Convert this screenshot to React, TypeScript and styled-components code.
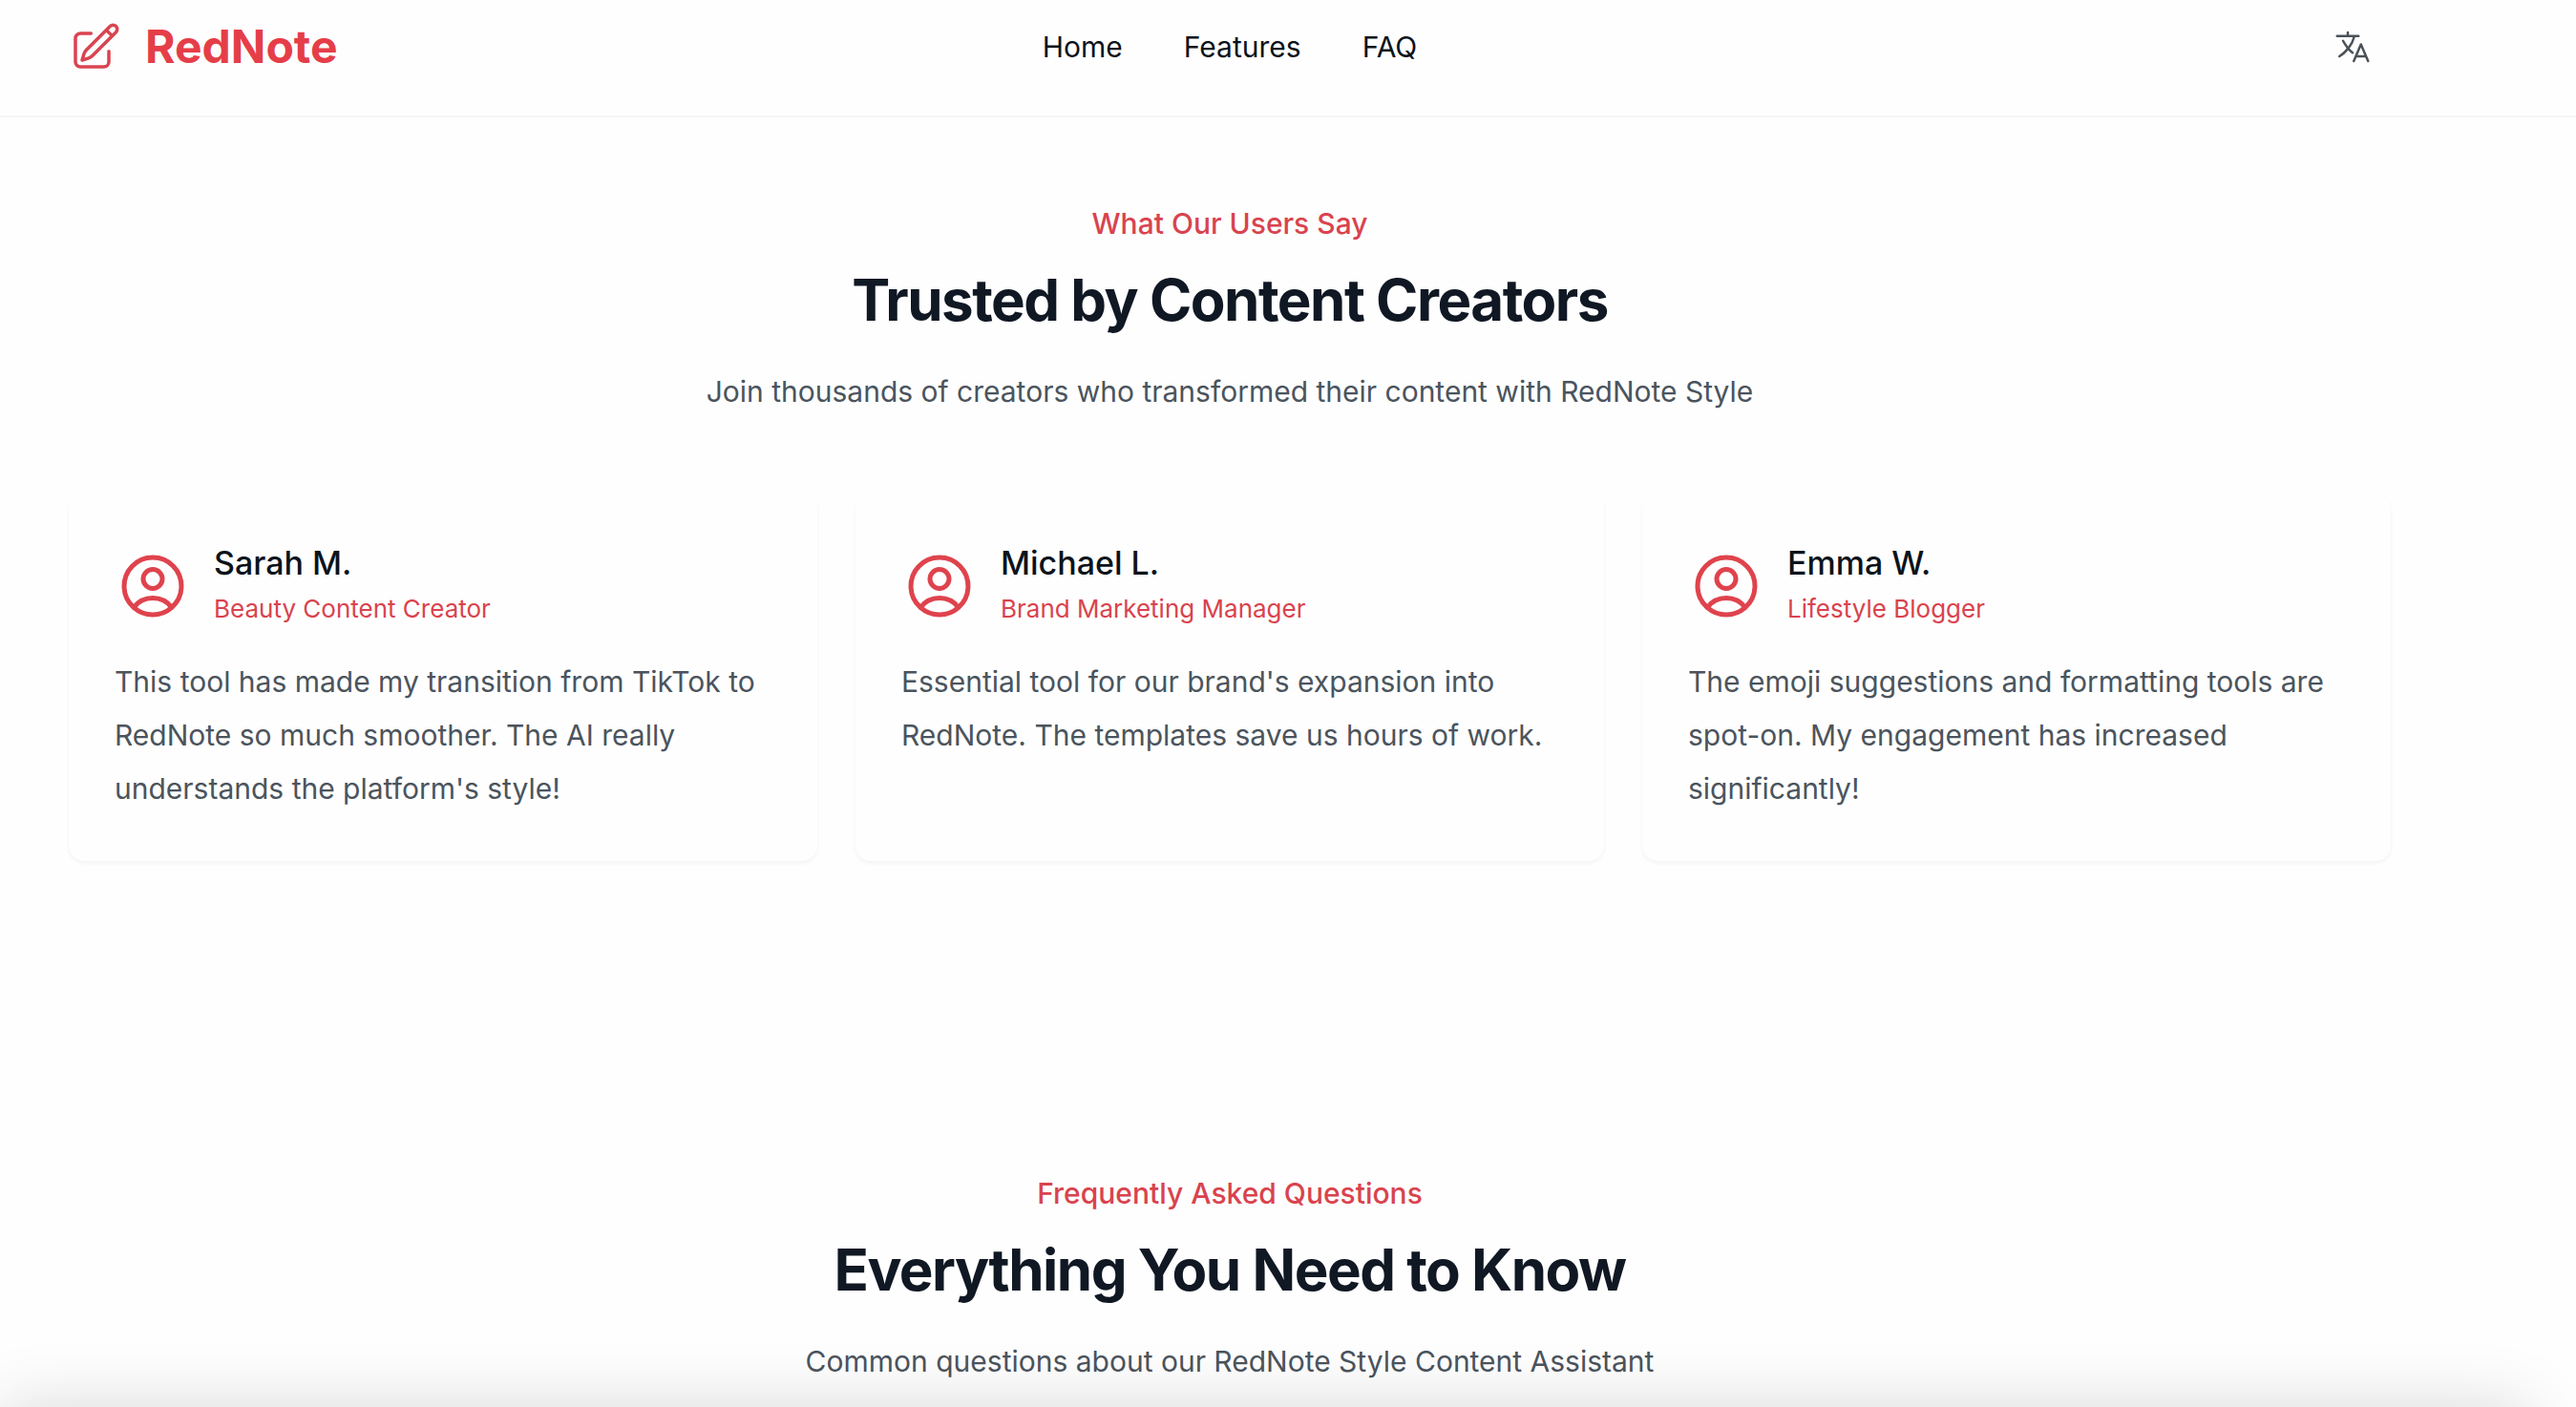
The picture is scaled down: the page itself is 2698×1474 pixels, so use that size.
import React from 'react';
import styled, { createGlobalStyle } from 'styled-components';
import { HiOutlinePencilSquare, HiOutlineUserCircle } from 'react-icons/hi2';
import { IoLanguageOutline } from 'react-icons/io5';

const GlobalStyle = createGlobalStyle`
  * {
    box-sizing: border-box;
    margin: 0;
  }

  body {
    background: #fefefe;
    font-family: 'Inter', sans-serif;
    color: #0d131b;
    overflow: hidden;
  }
`;

const PageContainer = styled.div`
  position: relative;
  height: 1474px;
  overflow: hidden;
`;

const Header = styled.header`
  height: 123px;
  border-bottom: 2px solid #f5f6f6;
`;

const HeaderInner = styled.div`
  width: 2432px;
  height: 98px;
  margin-left: 72px;
  display: grid;
  grid-template-columns: 1fr auto 1fr;
  align-items: center;
`;

const Logo = styled.div`
  display: flex;
  align-items: center;
  gap: 24px;
  color: #d94450;

  svg {
    width: 56px;
    height: 56px;
  }
`;

const LogoText = styled.span`
  padding-bottom: 2px;
  font-size: 48px;
  font-weight: 700;
  color: #e53e49;
`;

const Nav = styled.nav`
  display: flex;
  gap: 64px;
  font-size: 30px;
`;

const LanguageButton = styled.button`
  justify-self: end;
  display: flex;
  padding: 0;
  margin-right: 20px;
  border: none;
  background: none;
  color: #4a5157;

  svg {
    width: 40px;
    height: 40px;
  }
`;

const Section = styled.section<{ $top: number }>`
  width: 2432px;
  margin-left: 72px;
  padding-top: ${props => props.$top}px;
`;

const SectionHeader = styled.div`
  text-align: center;
`;

const Eyebrow = styled.p`
  font-size: 30px;
  font-weight: 500;
  line-height: 48px;
  color: #d9434e;
`;

const SectionTitle = styled.h2`
  margin-top: 16px;
  font-size: 60px;
  font-weight: 700;
  line-height: 80px;
  letter-spacing: -0.025em;
  color: #101824;
`;

const SectionSubtitle = styled.p`
  margin-top: 32px;
  font-size: 30px;
  line-height: 48px;
  color: #4b545d;
`;

const CardGrid = styled.div`
  display: grid;
  grid-template-columns: repeat(3, 1fr);
  gap: 40px;
  margin-top: 84px;
`;

const Card = styled.article`
  height: 384px;
  padding: 48px;
  border-radius: 16px;
  box-shadow: 0 2px 4px rgba(0, 0, 0, 0.05);
`;

const Author = styled.div`
  display: flex;
  align-items: center;
  gap: 24px;

  svg {
    width: 80px;
    height: 80px;
    color: #df434d;
  }
`;

const AuthorName = styled.h3`
  font-size: 34px;
  font-weight: 500;
  line-height: 48px;
`;

const AuthorRole = styled.p`
  font-size: 26px;
  line-height: 48px;
  color: #d9434e;
`;

const Quote = styled.p`
  margin-top: 24px;
  font-size: 30px;
  line-height: 56px;
  color: #4b545d;
`;

const BottomShade = styled.div`
  position: absolute;
  left: 0;
  right: 50px;
  bottom: -200px;
  height: 200px;
  box-shadow: 0 0 70px rgba(0, 0, 0, 0.15);
`;

const testimonials = [
  {
    name: 'Sarah M.',
    role: 'Beauty Content Creator',
    quote: "This tool has made my transition from TikTok to RedNote so much smoother. The AI really understands the platform's style!",
  },
  {
    name: 'Michael L.',
    role: 'Brand Marketing Manager',
    quote: "Essential tool for our brand's expansion into RedNote. The templates save us hours of work.",
  },
  {
    name: 'Emma W.',
    role: 'Lifestyle Blogger',
    quote: 'The emoji suggestions and formatting tools are spot-on. My engagement has increased significantly!',
  },
];

const App: React.FC = () => (
  <PageContainer>
    <GlobalStyle />
    <Header>
      <HeaderInner>
        <Logo>
          <HiOutlinePencilSquare />
          <LogoText>RedNote</LogoText>
        </Logo>
        <Nav>
          <span>Home</span>
          <span>Features</span>
          <span>FAQ</span>
        </Nav>
        <LanguageButton>
          <IoLanguageOutline />
        </LanguageButton>
      </HeaderInner>
    </Header>

    <Section $top={87}>
      <SectionHeader>
        <Eyebrow>What Our Users Say</Eyebrow>
        <SectionTitle>Trusted by Content Creators</SectionTitle>
        <SectionSubtitle>
          Join thousands of creators who transformed their content with RedNote Style
        </SectionSubtitle>
      </SectionHeader>
      <CardGrid>
        {testimonials.map((item) => (
          <Card key={item.name}>
            <Author>
              <HiOutlineUserCircle />
              <div>
                <AuthorName>{item.name}</AuthorName>
                <AuthorRole>{item.role}</AuthorRole>
              </div>
            </Author>
            <Quote>{item.quote}</Quote>
          </Card>
        ))}
      </CardGrid>
    </Section>

    <Section $top={324}>
      <SectionHeader>
        <Eyebrow>Frequently Asked Questions</Eyebrow>
        <SectionTitle>Everything You Need to Know</SectionTitle>
        <SectionSubtitle>Common questions about our RedNote Style Content Assistant</SectionSubtitle>
      </SectionHeader>
    </Section>
    <BottomShade />
  </PageContainer>
);

export default App;
